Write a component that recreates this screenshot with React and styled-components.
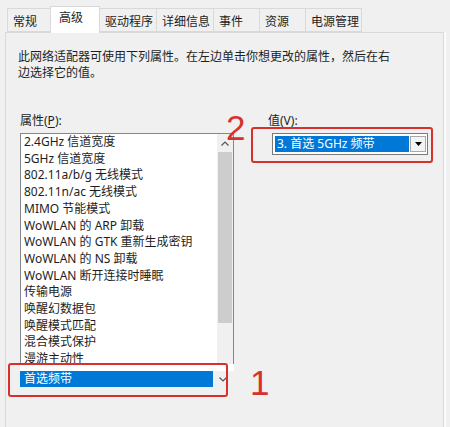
import styled, { createGlobalStyle } from 'styled-components'

const GlobalStyle = createGlobalStyle`
  body {
    margin: 0;
    background: #f0f0f0;
  }
`

const tabs = [
  { label: '常规', w: 44 },
  { label: '高级', w: 50, active: true },
  { label: '驱动程序', w: 58 },
  { label: '详细信息', w: 58 },
  { label: '事件', w: 47 },
  { label: '资源', w: 47 },
  { label: '电源管理', w: 57 },
]

const properties = [
  '2.4GHz 信道宽度',
  '5GHz 信道宽度',
  '802.11a/b/g 无线模式',
  '802.11n/ac 无线模式',
  'MIMO 节能模式',
  'WoWLAN 的 ARP 卸载',
  'WoWLAN 的 GTK 重新生成密钥',
  'WoWLAN 的 NS 卸载',
  'WoWLAN 断开连接时睡眠',
  '传输电源',
  '唤醒幻数据包',
  '唤醒模式匹配',
  '混合模式保护',
  '漫游主动性',
]

const App = () => {
  return (
    <Page>
      <GlobalStyle />
      <TabStrip>
        {tabs.map(t => (
          <Tab key={t.label} $w={t.w} $active={t.active}>
            {t.label}
          </Tab>
        ))}
      </TabStrip>
      <Panel>
        <Description>
          此网络适配器可使用下列属性。在左边单击你想更改的属性，然后在右边选择它的值。
        </Description>
        <Columns>
          <Column>
            <Label>
              属性(<u>P</u>):
            </Label>
            <ListBox>
              <Items>
                {properties.map(p => (
                  <Item key={p}>{p}</Item>
                ))}
              </Items>
              <Scrollbar>
                <ScrollArrow>
                  <svg width="8" height="5" viewBox="0 0 8 5">
                    <path d="M0.5 4.5 L4 1 L7.5 4.5" fill="none" stroke="#555" strokeWidth="1.2" />
                  </svg>
                </ScrollArrow>
                <Thumb />
              </Scrollbar>
            </ListBox>
            <ComboRow>
              <Selected>首选频带</Selected>
              <svg width="8" height="5" viewBox="0 0 8 5">
                <path d="M0.5 0.5 L4 4 L7.5 0.5" fill="none" stroke="#555" strokeWidth="1.2" />
              </svg>
            </ComboRow>
          </Column>
          <Column>
            <Label>
              值(<u>V</u>):
            </Label>
            <Dropdown>
              <DropValue>3. 首选 5GHz 频带</DropValue>
              <DropButton>
                <svg width="7" height="4" viewBox="0 0 7 4">
                  <path d="M0 0 H7 L3.5 4 Z" fill="#000" />
                </svg>
              </DropButton>
            </Dropdown>
          </Column>
        </Columns>
      </Panel>

      <Mark $left={8} $top={363} $w={220} $h={34} />
      <Digit $left={250} $top={365}>1</Digit>
      <Mark $left={251} $top={127} $w={182} $h={36} />
      <Digit $left={226} $top={110}>2</Digit>
    </Page>
  )
}

const Page = styled.div`
  position: relative;
  width: 450px;
  height: 427px;
  box-sizing: border-box;
  padding: 8px 6px 0 5px;
  overflow: hidden;
  background: #f0f0f0;
  color: #1e1e1e;
  font-family: 'Noto Sans', 'Noto Sans CJK SC', sans-serif;
  font-size: 12px;
`

const TabStrip = styled.div`
  display: flex;
  align-items: flex-end;
  height: 24px;
  padding-left: 3px;
`

const Tab = styled.div`
  position: relative;
  box-sizing: border-box;
  width: ${props => props.$w}px;
  height: ${props => (props.$active ? 27 : 24)}px;
  margin-bottom: ${props => (props.$active ? -1 : 0)}px;
  padding: ${props => (props.$active ? '3px 0 0 8px' : '5px 0 0 5px')};
  line-height: 16px;
  white-space: nowrap;
  background: ${props => (props.$active ? '#fff' : '#f0f0f0')};
  border: 1px solid #d9d9d9;
  border-bottom: ${props => (props.$active ? 'none' : '1px solid #d9d9d9')};
  margin-left: -1px;
  z-index: ${props => (props.$active ? 1 : 0)};
`

const Panel = styled.div`
  box-sizing: border-box;
  height: 395px;
  padding: 16px 0 0 12px;
  background: #f0f0f0;
  border: 1px solid #d9d9d9;
  border-bottom: none;
  box-shadow: 2px 0 0 #fbfbfb;
`

const Description = styled.div`
  width: 380px;
  line-height: 16px;
`

const Columns = styled.div`
  display: grid;
  grid-template-columns: 214px 160px;
  column-gap: 34px;
  margin: 32px 0 0 2px;
`

const Column = styled.div`
  display: flex;
  flex-direction: column;
  align-items: flex-start;
`

const Label = styled.div`
  line-height: 16px;
  margin-bottom: 4px;

  u {
    text-decoration-thickness: 1px;
    text-underline-offset: 2px;
  }
`

const ListBox = styled.div`
  box-sizing: border-box;
  display: flex;
  width: 214px;
  height: 231px;
  background: #fff;
  border: 1px solid #828790;
  border-bottom: none;
  overflow: hidden;
`

const Items = styled.div`
  flex: 1;
  padding-left: 3px;
  overflow: hidden;
`

const Item = styled.div`
  line-height: 16.7px;
  white-space: nowrap;
`

const Scrollbar = styled.div`
  display: flex;
  flex-direction: column;
  align-items: center;
  width: 16px;
  background: #f0f0f0;
`

const ScrollArrow = styled.div`
  display: flex;
  align-items: center;
  justify-content: center;
  height: 18px;
`

const Thumb = styled.div`
  width: 14px;
  height: 171px;
  background: #cdcdcd;
`

const ComboRow = styled.div`
  display: flex;
  align-items: center;
  gap: 6px;
  width: 214px;
  padding-top: 7px;
  background: linear-gradient(#fff, #fff) no-repeat 0 0 / 214px 7px;
`

const Selected = styled.div`
  box-sizing: border-box;
  width: 193px;
  height: 16px;
  padding-left: 4px;
  line-height: 16px;
  color: #fff;
  background: #0078d7;
`

const Dropdown = styled.div`
  box-sizing: border-box;
  display: flex;
  width: 156px;
  height: 22px;
  margin-left: 4px;
  padding: 2px 1px 2px 2px;
  background: #fff;
  border: 1px solid #7a7a7a;
`

const DropValue = styled.div`
  flex: 1;
  padding-left: 2px;
  line-height: 16px;
  color: #fff;
  background: #0078d7;
  white-space: nowrap;
`

const DropButton = styled.div`
  display: flex;
  align-items: center;
  justify-content: center;
  width: 14px;
  margin-left: 1px;
  background: #f4f4f4;
  border: 1px solid #a8a8a8;
`

const Mark = styled.div`
  position: absolute;
  left: ${props => props.$left}px;
  top: ${props => props.$top}px;
  width: ${props => props.$w}px;
  height: ${props => props.$h}px;
  box-sizing: border-box;
  border: 2.5px solid #d8302c;
  border-radius: 3px;
`

const Digit = styled.div`
  position: absolute;
  left: ${props => props.$left}px;
  top: ${props => props.$top}px;
  font-family: 'Liberation Sans', sans-serif;
  font-size: 35px;
  line-height: 1;
  color: #d8302c;
`

export default App
